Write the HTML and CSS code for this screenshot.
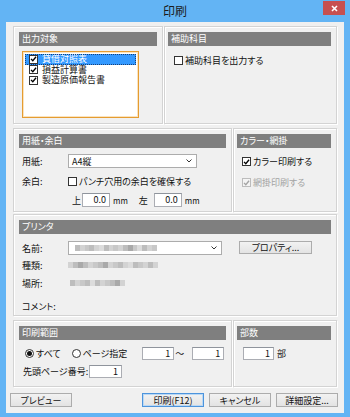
FILE: index.html
```html
<!DOCTYPE html>
<html lang="ja">
<head>
<meta charset="utf-8">
<title>印刷</title>
<link rel="stylesheet" href="styles.css">
</head>
<body>
<div class="window">
  <div class="titlebar">
    <span></span>
    <span class="title">印刷</span>
    <span class="close"><svg width="7" height="7" viewBox="0 0 7 7"><path d="M1 1L6 6M6 1L1 6" stroke="#fff" stroke-width="1.6"/></svg></span>
  </div>
  <div class="body">
    <div class="row r1">
      <section class="group g-out">
        <div class="hdr">出力対象</div>
        <div class="listbox">
          <div class="item sel"><span class="cb lcb"><svg viewBox="0 0 9 9"><path d="M1.3 4.3L3.6 6.8L7.8 1.6" fill="none" stroke="#000" stroke-width="1.7"/></svg></span><span class="itext">貸借対照表</span></div>
          <div class="item"><span class="cb lcb"><svg viewBox="0 0 9 9"><path d="M1.3 4.3L3.6 6.8L7.8 1.6" fill="none" stroke="#000" stroke-width="1.7"/></svg></span><span class="itext">損益計算書</span></div>
          <div class="item"><span class="cb lcb"><svg viewBox="0 0 9 9"><path d="M1.3 4.3L3.6 6.8L7.8 1.6" fill="none" stroke="#000" stroke-width="1.7"/></svg></span><span class="itext">製造原価報告書</span></div>
        </div>
      </section>
      <section class="group g-right g-sub">
        <div class="hdr">補助科目</div>
        <div class="chk sub-chk"><span class="cb"></span>補助科目を出力する</div>
      </section>
    </div>

    <div class="row r2">
      <section class="group g-paper">
        <div class="hdr">用紙・余白</div>
        <div class="frow f-paper">
          <span class="lbl">用紙:</span>
          <span class="select sel-paper"><span>A4縦</span><svg class="chev" width="6" height="4" viewBox="0 0 6 4"><path d="M0.5 0.5L3 3L5.5 0.5" fill="none" stroke="#333" stroke-width="1"/></svg></span>
        </div>
        <div class="frow f-margin">
          <span class="lbl">余白:</span>
          <span class="chk"><span class="cb"></span>パンチ穴用の余白を確保する</span>
        </div>
        <div class="frow f-mm">
          <span class="side">上</span>
          <span class="input w28">0.0</span>
          <span class="unit">mm</span>
          <span class="side side2">左</span>
          <span class="input w28">0.0</span>
          <span class="unit">mm</span>
        </div>
      </section>
      <section class="group g-right g-color">
        <div class="hdr">カラー・網掛</div>
        <div class="chk color-chk"><span class="cb"><svg viewBox="0 0 9 9"><path d="M1.3 4.3L3.6 6.8L7.8 1.6" fill="none" stroke="#000" stroke-width="1.7"/></svg></span>カラー印刷する</div>
        <div class="chk dis-chk disabled"><span class="cb"><svg viewBox="0 0 9 9"><path d="M1.3 4.3L3.6 6.8L7.8 1.6" fill="none" stroke="#a3a3a3" stroke-width="1.7"/></svg></span>網掛印刷する</div>
      </section>
    </div>

    <div class="row r3">
      <section class="group g-printer">
        <div class="hdr">プリンタ</div>
        <div class="frow p-name">
          <span class="lbl">名前:</span>
          <span class="select sel-printer">
            <span class="mosaic">
              <i class="b"></i><i class="a"></i><i class="c"></i><i class="b"></i><i class="a"></i><i class="e"></i><i class="b"></i><i class="a"></i><i class="c"></i><i class="a"></i><i class="b"></i><i class="d"></i><i class="c"></i><i class="e"></i><i class="b"></i><i class="a"></i><i class="c"></i>
            </span>
            <svg class="chev" width="6" height="4" viewBox="0 0 6 4"><path d="M0.5 0.5L3 3L5.5 0.5" fill="none" stroke="#333" stroke-width="1"/></svg>
          </span>
          <span class="btn btn-prop">プロパティ...</span>
        </div>
        <div class="frow p-line p-kind">
          <span class="lbl">種類:</span>
          <span class="mosaic">
            <i class="a"></i><i class="b"></i><i class="d"></i><i class="b"></i><i class="a"></i><i class="c"></i><i class="b"></i><i class="d"></i><i class="a"></i><i class="c"></i><i class="b"></i><i class="a"></i><i class="e"></i><i class="b"></i><i class="c"></i><i class="a"></i><i class="b"></i><i class="a"></i>
          </span>
        </div>
        <div class="frow p-line">
          <span class="lbl">場所:</span>
          <span class="mosaic loc">
            <i class="b"></i><i class="a"></i><i class="c"></i><i class="b"></i><i class="e"></i><i class="b"></i><i class="a"></i><i class="c"></i><i class="b"></i><i class="d"></i><i class="a"></i>
          </span>
        </div>
        <div class="frow p-line p-comment">
          <span class="lbl">コメント:</span>
        </div>
      </section>
    </div>

    <div class="row r4">
      <section class="group g-range">
        <div class="hdr">印刷範囲</div>
        <div class="frow rg-row">
          <span class="radio on"></span><span class="rtext">すべて</span>
          <span class="radio r2nd"></span><span class="rtext">ページ指定</span>
          <span class="input w32 from">1</span>
          <span class="tilde">～</span>
          <span class="input w32 to">1</span>
        </div>
        <div class="frow rg-row2">
          <span class="lbl2">先頭ページ番号:</span>
          <span class="input w33">1</span>
        </div>
      </section>
      <section class="group g-right g-copies">
        <div class="hdr">部数</div>
        <div class="frow cp-row">
          <span class="input w31">1</span>
          <span class="bu">部</span>
        </div>
      </section>
    </div>

    <div class="buttons">
      <span class="btn bw preview">プレビュー</span>
      <span class="spacer"></span>
      <span class="btn bw default">印刷(F12)</span>
      <span class="btn bw">キャンセル</span>
      <span class="btn bw">詳細設定...</span>
    </div>
  </div>
</div>
</body>
</html>
```

FILE: styles.css
```css
* { box-sizing: border-box; margin: 0; padding: 0; }

body {
  margin: 0;
  width: 350px;
  height: 417px;
  overflow: hidden;
  font-family: "Noto Sans CJK JP", "Noto Sans", sans-serif;
  font-size: 9px;
  font-feature-settings: "palt";
  color: #111;
  background: #63b4f4;
}

.window {
  width: 350px;
  height: 417px;
  background: #63b4f4;
  padding: 0 6px 4px;
  display: flex;
  flex-direction: column;
}

.titlebar {
  height: 22px;
  display: grid;
  grid-template-columns: 1fr auto 1fr;
  align-items: start;
}

.title {
  font-size: 12px;
  line-height: 22px;
  color: #1b1b1b;
}

.close {
  justify-self: end;
  margin-right: -1px;
  margin-top: 1px;
  width: 22px;
  height: 14px;
  background: #c75050;
  display: flex;
  align-items: center;
  justify-content: center;
}

.body {
  flex: 1;
  background: #f0f0f0;
  padding: 4px 7px 0 7px;
  display: flex;
  flex-direction: column;
}

.row { display: flex; gap: 1px; }
.r1 { height: 98px; }
.r2 { height: 84px; margin-top: 4px; }
.r3 { height: 102px; margin-top: 2px; }
.r4 { height: 67px; margin-top: 4px; }

.group {
  border: 1px solid #d3d3d3;
  box-shadow: inset 1px 1px 0 #fff, 1px 1px 0 #fff;
  padding: 5px;
  display: flex;
  flex-direction: column;
}
.g-right { padding-left: 3px; flex: 1; }
.g-out { width: 150px; }
.g-paper, .g-range { width: 219px; }
.g-printer { flex: 1; }

.hdr {
  height: 14px;
  flex: none;
  background: #7f7f7f;
  color: #fff;
  padding-left: 3px;
  line-height: 14px;
  white-space: nowrap;
}

/* checkbox */
.cb {
  width: 9px;
  height: 9px;
  flex: none;
  border: 1px solid #333;
  background: #fff;
  display: inline-flex;
  align-items: center;
  justify-content: center;
}
.cb svg { width: 8px; height: 8px; }
.lcb { width: 9px; height: 9px; }
.lcb svg { width: 8px; height: 8px; }

.chk {
  display: flex;
  align-items: center;
  gap: 2px;
  white-space: nowrap;
  line-height: 11px;
}
.disabled { color: #a3a3a3; }
.disabled .cb { border-color: #bcbcbc; background: #f4f4f4; }

/* listbox */
.listbox {
  margin: 5px 0 0 3px;
  width: 117px;
  height: 70px;
  border: 1px solid #e59c31;
  box-shadow: inset 0 0 0 1px #fbe3bd;
  background: #fff;
  padding: 2px;
  display: flex;
  flex-direction: column;
}
.item {
  display: flex;
  align-items: center;
  height: 10.5px;
  flex: none;
  padding-left: 4px;
  gap: 4px;
  white-space: nowrap;
  line-height: 10px;
}
.itext { font-size: 9px; line-height: 10px; }
.item.sel {
  background: #3399ff;
  color: #fff;
  outline: 1px dotted #1a3f73;
  outline-offset: -1px;
}

.sub-chk { margin: 9px 0 0 6px; }

/* forms */
.frow {
  display: flex;
  align-items: center;
  white-space: nowrap;
  flex: none;
}
.lbl { width: 46px; margin-left: 3px; flex: none; }

.select {
  height: 14px;
  border: 1px solid #acacac;
  background: #fff;
  display: flex;
  align-items: center;
  justify-content: space-between;
  padding: 0 4px 0 3px;
}
.chev { flex: none; }

.input {
  height: 14px;
  border: 1px solid #abadb3;
  border-top-color: #8f949c;
  background: #fff;
  text-align: right;
  padding-right: 3px;
  line-height: 12px;
  flex: none;
}
.w28 { width: 28px; }
.w31 { width: 31px; }
.w32 { width: 32px; }
.w33 { width: 33px; }

.f-paper { margin-top: 6px; height: 14px; }
.sel-paper { width: 129px; }
.f-margin { margin-top: 6px; height: 14px; }
.f-mm { margin-top: 5px; height: 14px; }
.side { margin-left: 53px; width: 10px; }
.side2 { margin-left: 11px; width: 15px; }
.unit { margin-left: 3px; font-size: 8px; }

.color-chk { margin: 8px 0 0 5px; }
.dis-chk { margin: 10px 0 0 5px; }

/* printer */
.p-name { margin-top: 7px; height: 14px; }
.sel-printer { width: 154px; padding-left: 6px; }
.btn {
  height: 13px;
  border: 1px solid #acacac;
  background: linear-gradient(#f2f2f2, #e3e3e3);
  display: inline-flex;
  align-items: center;
  justify-content: center;
  flex: none;
  white-space: nowrap;
}
.btn-prop { width: 73px; margin-left: 17px; margin-top: -2px; }

.p-line { height: 18px; }
.p-kind { margin-top: 1px; }
.p-comment { margin-top: 5px; }

.mosaic { display: inline-flex; height: 6px; }
.mosaic i { width: 5px; height: 6px; background: #cfcfcf; }
.mosaic i.a { background: #d3d3d3; }
.mosaic i.b { background: #bdbdbd; }
.mosaic i.c { background: #c8c8c8; }
.mosaic i.d { background: #a9a9a9; }
.mosaic i.e { background: #dcdcdc; }
.sel-printer .mosaic i { width: 4.8px; }
.loc { margin-left: 2px; }

/* range */
.radio {
  width: 9px;
  height: 9px;
  border: 1px solid #333;
  border-radius: 50%;
  background: #fff;
  flex: none;
  display: inline-flex;
  align-items: center;
  justify-content: center;
}
.radio.on::after {
  content: "";
  width: 5px;
  height: 5px;
  border-radius: 50%;
  background: #111;
}
.rg-row { margin: 7px 0 0 6px; height: 13px; }
.rtext { margin-left: 2px; }
.r2nd { margin-left: 11px; }
.from { margin-left: 15px; height: 13px; }
.to { height: 13px; }
.tilde { width: 18px; padding-left: 1px; }
.rg-row2 { margin-top: 5px; height: 13px; }
.rg-row2 .input { height: 13px; }
.lbl2 { margin-left: 4px; width: 66px; }

.cp-row { margin: 7px 0 0 6px; height: 13px; }
.cp-row .input { height: 13px; }
.bu { margin-left: 3px; }

/* buttons */
.buttons {
  display: flex;
  margin-top: 6px;
  margin-left: -3px;
  margin-right: -1px;
  gap: 5px;
}
.bw { width: 62px; height: 14px; }
.spacer { flex: 1; margin-left: -5px; }
.default { border-color: #4d94dc; box-shadow: inset 0 0 0 1px #b9d8f5; }
```
